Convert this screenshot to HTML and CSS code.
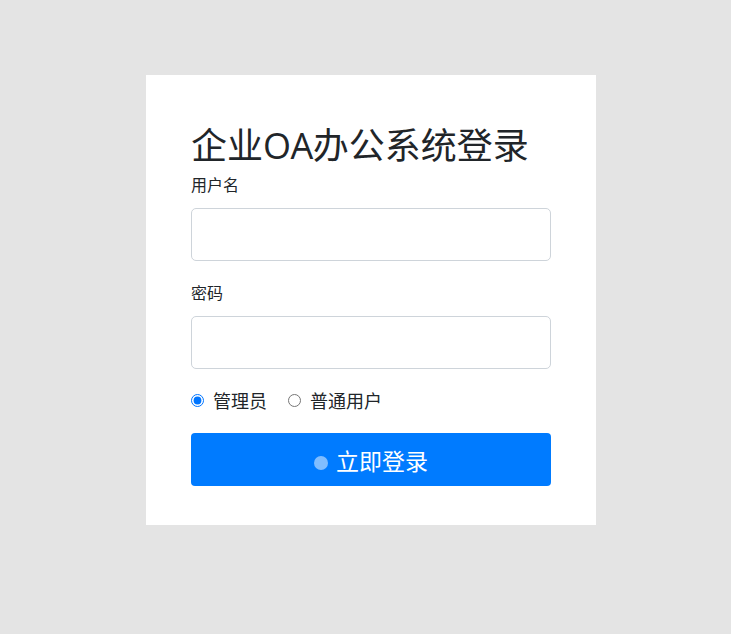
FILE: index.html
```html
<!DOCTYPE html>
<html lang="zh-CN">
<head>
<meta charset="utf-8">
<title>企业OA办公系统登录</title>
<link rel="stylesheet" href="styles.css">
</head>
<body>
<div class="page">
  <form class="card">
    <h1 class="title">企业<span class="latin">OA</span>办公系统登录</h1>
    <label class="label" for="u">用户名</label>
    <input class="input" id="u" type="text">
    <label class="label label-2" for="p">密码</label>
    <input class="input" id="p" type="password">
    <div class="roles">
      <label class="role"><input type="radio" name="role" checked><span>管理员</span></label>
      <label class="role"><input type="radio" name="role"><span>普通用户</span></label>
    </div>
    <button class="btn" type="button"><span class="dot"></span><span>立即登录</span></button>
  </form>
</div>
</body>
</html>
```

FILE: styles.css
```css
* { box-sizing: border-box; }
html, body { margin: 0; padding: 0; }
body {
  background: #e4e4e4;
  font-family: "Noto Sans CJK SC", "Noto Sans", sans-serif;
  color: #212529;
  height: 634px;
}
.page {
  padding: 75px 0 0 146px;
}
.card {
  width: 450px;
  height: 450px;
  background: #fff;
  padding: 47px 45px 0;
  display: flex;
  flex-direction: column;
}
.card > * { flex-shrink: 0; }
.title {
  margin: 0;
  font-size: 36px;
  line-height: 43px;
  font-weight: 400;
  white-space: nowrap;
}
.latin {
  font-family: "Open Sans", sans-serif;
  font-weight: 500;
  letter-spacing: -0.5px;
}
.label {
  font-size: 16px;
  line-height: 24px;
  margin-top: 5px;
  margin-bottom: 12px;
}
.label-2 { margin-top: 19px; }
.input {
  display: block;
  width: 360px;
  height: 53px;
  border: 1px solid #ced4da;
  border-radius: 5px;
  background: #fff;
  font-size: 18px;
  padding: 0 12px;
  outline: none;
}
.roles {
  display: flex;
  align-items: center;
  gap: 21px;
  margin-top: 18px;
  height: 27px;
}
.role {
  display: flex;
  align-items: center;
  gap: 9px;
  font-size: 18px;
  line-height: 27px;
}
.role input {
  margin: 0;
  width: 13px;
  height: 13px;
}
.btn {
  margin-top: 19px;
  height: 53px;
  width: 360px;
  border: none;
  border-radius: 4px;
  background: #007bff;
  color: #fff;
  font-family: inherit;
  font-size: 23px;
  display: flex;
  align-items: center;
  justify-content: center;
  gap: 8px;
  padding: 0;
}
.dot {
  width: 14px;
  height: 14px;
  border-radius: 50%;
  background: #fff;
  opacity: 0.5;
  margin-top: 6px;
}
```
